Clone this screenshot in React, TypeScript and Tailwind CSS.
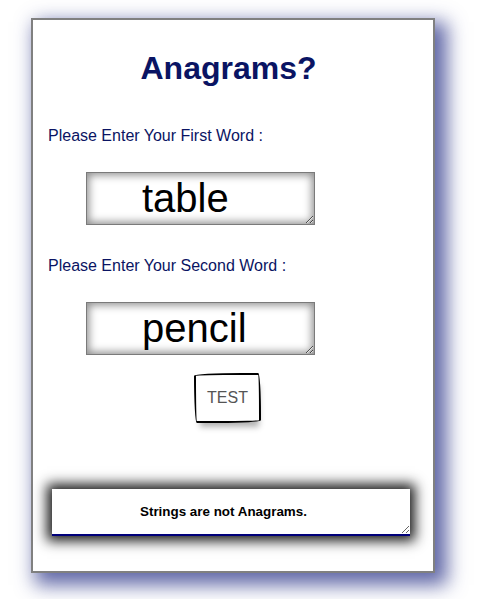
const App = () => {
    const words = [
        { label: "Please Enter Your First Word :", value: "table" },
        { label: "Please Enter Your Second Word :", value: "pencil" },
    ];

    return (
        <main className="min-h-[599px] w-[483px] bg-white pt-[18px] pl-[31px] font-['Liberation_Sans',Arial,sans-serif]">
            <div className="w-[404px] h-[555px] border-2 border-[#808080] bg-white pl-[15px] pr-[16px] shadow-[8px_8px_18px_4px_rgba(30,40,130,0.7)]">
                {/* Title */}
                <h1 className="mt-[28px] pr-[8px] text-center text-[32px] font-bold leading-[40px] text-[#0a1463]">
                    Anagrams?
                </h1>

                {/* Word inputs */}
                {words.map((word, index) => (
                    <div key={index}>
                        <p className={`${index === 0 ? "mt-[38px]" : "mt-[31px]"} text-[16px] leading-[20px] text-[#0a1463]`}>
                            {word.label}
                        </p>
                        <textarea
                            defaultValue={word.value}
                            className="mt-[26px] ml-[38px] block h-[53px] w-[229px] resize-y border border-[#7a7a7a] bg-white pl-[55px] pt-[1px] text-[40px] leading-[48px] text-black shadow-[inset_0_0_9px_2px_rgba(0,0,0,0.45)] outline-none overflow-hidden"
                        />
                    </div>
                ))}

                {/* Test button */}
                <div className="mt-[18px] flex justify-center pr-[10px]">
                    <button className="h-[50px] w-[67px] border-2 border-black bg-white text-[16px] text-[#555] rounded-[255px_15px_225px_15px/15px_225px_15px_255px] shadow-[2px_8px_6px_-4px_rgba(0,0,0,0.3)]">
                        TEST
                    </button>
                </div>

                {/* Result */}
                <textarea
                    readOnly
                    defaultValue="Strings are not Anagrams."
                    className="mt-[66px] ml-[4px] block h-[47px] w-[358px] resize-y border-0 border-b-2 border-[#00007a] bg-white pl-[88px] pt-[15px] text-left text-[13.4px] font-bold leading-[16px] text-black shadow-[0_0_12px_5px_rgba(0,0,0,0.9)] outline-none overflow-hidden"
                />
            </div>
        </main>
    );
};

export default App;
